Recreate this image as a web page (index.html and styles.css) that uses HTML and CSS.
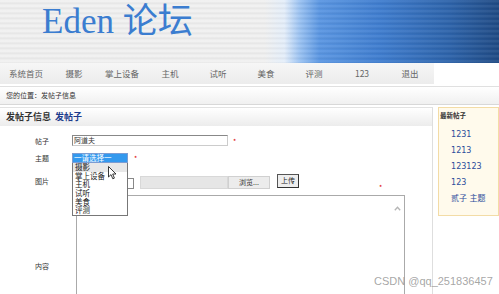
FILE: index.html
```html
<!DOCTYPE html>
<html lang="zh-CN">
<head>
    <meta charset="UTF-8">
    <title>Eden 论坛 - 发帖子</title>
    <link rel="stylesheet" href="styles.css">
</head>
<body>
<div class="header">
    <h1 class="logo">Eden 论坛</h1>
</div>
<ul class="nav">
    <li>系统首页</li>
    <li>摄影</li>
    <li>掌上设备</li>
    <li>主机</li>
    <li>试听</li>
    <li>美食</li>
    <li>评测</li>
    <li>123</li>
    <li>退出</li>
</ul>
<div class="crumb">您的位置：发帖子信息</div>
<div class="main">
    <div class="content">
        <div class="box-title">发帖子信息 <span>发帖子</span></div>
        <form class="post-form" action="#">
            <div class="row row-title">
                <label>帖子</label>
                <div class="text-input">阿道夫</div>
                <em class="req">*</em>
            </div>
            <div class="row row-topic">
                <label>主题</label>
                <div class="select-open">
                    <div class="select-current">一请选择一</div>
                    <ul class="options">
                        <li class="hover">摄影</li>
                        <li>掌上设备</li>
                        <li>主机</li>
                        <li>试听</li>
                        <li>美食</li>
                        <li>评测</li>
                    </ul>
                    <svg class="cursor" width="9" height="14" viewBox="0 0 9 14">
                        <path d="M0.5 0.5 L0.5 11 L3 8.6 L4.8 12.8 L6.4 12.1 L4.7 8 L8 8 Z" fill="#fff" stroke="#222" stroke-width="0.9" stroke-linejoin="round"/>
                    </svg>
                </div>
                <em class="req">*</em>
            </div>
            <div class="row row-pic">
                <label>图片</label>
                <div class="file-box"></div>
                <div class="file-field"></div>
                <div class="file-btn">浏览...</div>
                <div class="upload-btn">上传</div>
                <em class="req req-pic">*</em>
            </div>
            <div class="row row-body">
                <label>内容</label>
                <div class="textarea">
                    <svg class="scroll-up" width="7" height="5" viewBox="0 0 7 5">
                        <path d="M0.8 4.2 L3.5 1.2 L6.2 4.2" fill="none" stroke="#b5b5b5" stroke-width="1.3"/>
                    </svg>
                </div>
            </div>
        </form>
    </div>
    <div class="side">
        <div class="side-title">最新帖子</div>
        <ul class="side-list">
            <li>1231</li>
            <li>1213</li>
            <li>123123</li>
            <li>123</li>
            <li>贰子 主题</li>
        </ul>
    </div>
</div>
<div class="watermark">CSDN @qq_251836457</div>
</body>
</html>
```

FILE: styles.css
```css
* {
    margin: 0;
    padding: 0;
}

body {
    width: 499px;
    height: 294px;
    overflow: hidden;
    position: relative;
    background: #fff;
    font-family: "Noto Sans CJK SC", sans-serif;
    color: #333;
}

ul {
    list-style: none;
}

.header {
    height: 63px;
    background:
        repeating-linear-gradient(180deg, rgba(255,255,255,0.06) 0, rgba(255,255,255,0.06) 2px, rgba(0,0,0,0.05) 3px, rgba(0,0,0,0) 5px),
        linear-gradient(90deg, #f0f0f0 0, #f0f0f0 53%, #e4eefa 57%, #9cc3f2 60%, #5a96e2 64%, #3f7dcf 76%, #2d63aa 90%, #1f4a84 100%);
}

.logo {
    padding: 3px 0 0 42px;
    font-family: "Liberation Serif", "Noto Sans CJK SC", serif;
    font-weight: normal;
    font-size: 35px;
    line-height: 38px;
    color: #3b7dd0;
}

.nav {
    display: flex;
    width: 432px;
    height: 21px;
    padding-left: 2px;
    background: linear-gradient(#f6f6f6, #ececec);
}

.nav li {
    width: 48px;
    text-align: center;
    font-size: 8.5px;
    line-height: 21px;
    color: #666;
}

.crumb {
    margin-top: 2px;
    height: 17px;
    padding-left: 6px;
    border-top: 1px solid #e0e0e0;
    border-bottom: 1px solid #d8d8d8;
    background: linear-gradient(#fff, #f0f0f0);
    font-size: 7px;
    line-height: 16px;
    color: #333;
}

.main {
    display: flex;
    gap: 5px;
    margin-top: 2px;
}

.content {
    width: 440px;
    height: 200px;
    border-top: 1px solid #e2e2e2;
    border-right: 1px solid #dedede;
}

.box-title {
    height: 18px;
    padding-left: 6px;
    background: linear-gradient(#fff, #ececec);
    font-size: 9px;
    font-weight: bold;
    line-height: 18px;
    color: #333;
}

.box-title span {
    margin-left: 2px;
    color: #1c3b8c;
}

.post-form {
    padding-top: 8px;
}

.row {
    display: flex;
    align-items: center;
}

.row label {
    width: 37px;
    padding-left: 35px;
    font-size: 7px;
    color: #333;
}

.req {
    font-style: normal;
    font-size: 7px;
    color: #d00;
    margin-left: 5px;
}

.row-title {
    height: 13px;
}

.text-input {
    width: 153px;
    height: 9px;
    border: 1px solid #888;
    border-right-color: #ccc;
    border-bottom-color: #ccc;
    font-size: 7px;
    line-height: 9px;
    padding-left: 1px;
}

.row-topic {
    height: 22px;
}

.select-open {
    position: relative;
    width: 56px;
    height: 10px;
    z-index: 2;
}

.select-current {
    height: 10px;
    border: 1px solid #7a9cd3;
    box-sizing: border-box;
    background: #3399ee;
    color: #fff;
    font-size: 7.5px;
    line-height: 8px;
    padding-left: 1px;
}

.options {
    position: absolute;
    left: 0;
    top: 10px;
    width: 56px;
    height: 53px;
    box-sizing: border-box;
    border: 1px solid #777;
    border-top: none;
    background: #fff;
    padding-left: 2px;
}

.options li {
    height: 8.7px;
    font-size: 7.5px;
    line-height: 8.7px;
    color: #222;
}

.options .hover {
    background: #e8e8e8;
    margin-left: -2px;
    padding-left: 2px;
}

.cursor {
    position: absolute;
    left: 36px;
    top: 13px;
}

.row-topic .req {
    margin-left: 6px;
}

.row-pic {
    height: 24px;
}

.file-box {
    width: 60px;
    height: 9px;
    border: 1px solid #888;
    margin-top: 4px;
}

.file-field {
    width: 86px;
    height: 11px;
    margin-left: 6px;
    background: #e6e6e6;
    border: 1px solid #d8d8d8;
    margin-top: 3px;
}

.file-btn {
    width: 40px;
    height: 11px;
    margin-top: 3px;
    border: 1px solid #d0d0d0;
    background: #ececec;
    font-size: 7px;
    line-height: 11px;
    text-align: center;
    color: #333;
}

.upload-btn {
    width: 20px;
    height: 12px;
    margin-left: 7px;
    border: 1px solid #555;
    border-right-color: #333;
    border-bottom-color: #333;
    background: #eee;
    font-size: 7px;
    line-height: 10px;
    text-align: center;
    color: #222;
}

.req-pic {
    margin-left: 80px;
    margin-top: 12px;
}

.row-body {
    margin-top: 2px;
}

.textarea {
    position: relative;
    width: 327px;
    height: 99px;
    margin-left: 4px;
    border: 1px solid #aaa;
    border-bottom: none;
}

.row-body label {
    margin-top: 42px;
}

.scroll-up {
    position: absolute;
    right: 3px;
    top: 10px;
}

.side {
    width: 60px;
    height: 107px;
    border: 1px solid #f3dca6;
    background: #fffaec;
}

.side-title {
    padding-left: 1px;
    font-size: 6.5px;
    font-weight: bold;
    line-height: 15px;
    color: #333;
}

.side-list {
    padding: 4px 0 0 12px;
}

.side-list li {
    font-family: "DejaVu Sans", "Noto Sans CJK SC", sans-serif;
    font-size: 8px;
    line-height: 16px;
    color: #2b4c9b;
}

.watermark {
    position: absolute;
    left: 374px;
    top: 275px;
    font-family: "Liberation Sans", sans-serif;
    font-size: 11px;
    color: rgba(150, 150, 150, 0.85);
}
```
